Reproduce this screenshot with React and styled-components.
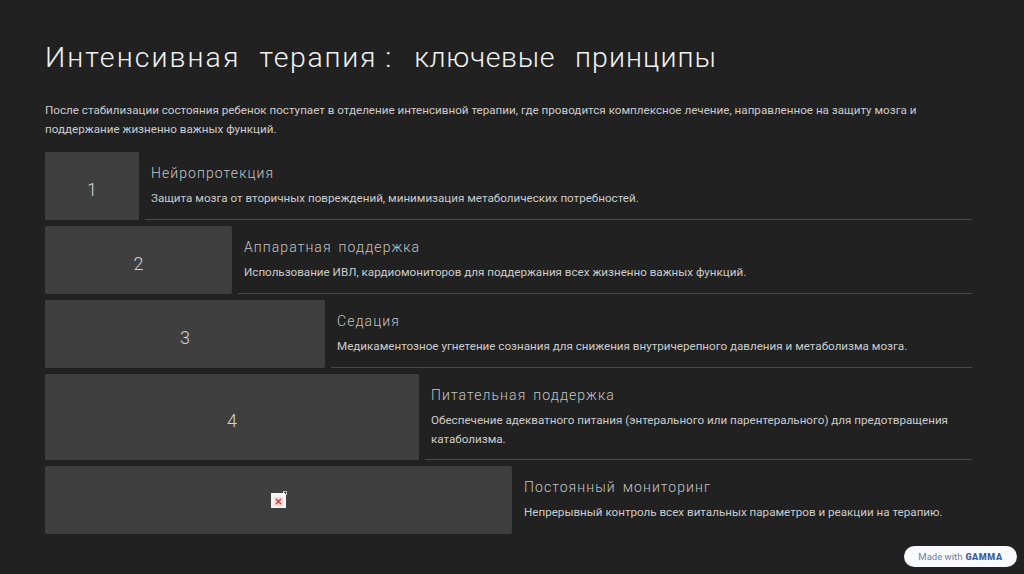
import React from "react";
import styled, { createGlobalStyle } from "styled-components";

const GlobalStyle = createGlobalStyle`
    html, body {
        margin: 0;
        padding: 0;
        background-color: #212121;
    }
`;

const Slide = styled.section`
    position: relative;
    box-sizing: border-box;
    width: 1024px;
    height: 574px;
    padding: 38px 52px 0 45px;
    overflow: hidden;
    background-color: #212121;
    font-family: Roboto, sans-serif;
`;

const Title = styled.h1`
    display: flex;
    margin: 0;
    font-size: 28.5px;
    line-height: 40px;
    font-weight: 300;
    color: #f1f1f1;
`;

const TitleWord = styled.span`
    margin-right: ${(p) => p.$gap}px;
    letter-spacing: ${(p) => p.$tracking}px;
`;

const Intro = styled.p`
    margin: 23px 0 13px;
    font-size: 11.65px;
    line-height: 19px;
    font-weight: 400;
    color: #cccccc;
`;

const Steps = styled.div`
    display: flex;
    flex-direction: column;
    gap: 6px;
`;

const Step = styled.div`
    display: flex;
    align-items: stretch;
    gap: 6px;
`;

const Block = styled.div`
    flex: 0 0 ${(p) => p.$width}px;
    box-sizing: border-box;
    display: flex;
    align-items: center;
    justify-content: center;
    padding-top: ${(p) => (p.$icon ? 0 : 6)}px;
    border-radius: 2px;
    background-color: #3f3f3f;
    font-size: 18px;
    font-weight: 300;
    color: #d4d4d4;
`;

const Body = styled.div`
    flex: 1;
    box-sizing: border-box;
    min-height: 68px;
    padding: 11px 6px 10px;
    border-bottom: ${(p) => (p.$plain ? "none" : "1px solid #4a4a4a")};
`;

const StepTitle = styled.h2`
    margin: 0 0 6px;
    font-size: 14px;
    line-height: 20px;
    font-weight: 300;
    letter-spacing: 1.08px;
    word-spacing: 2.5px;
    color: #c4c4c4;
`;

const StepText = styled.p`
    margin: 0;
    font-size: 11.64px;
    line-height: 19px;
    font-weight: 400;
    color: #cccccc;
`;

const BrokenImage = styled.svg`
    display: block;
    width: 18px;
    height: 18px;
`;

const Badge = styled.div`
    position: absolute;
    right: 7px;
    bottom: 7px;
    box-sizing: border-box;
    width: 113px;
    height: 21px;
    display: flex;
    align-items: center;
    justify-content: center;
    gap: 3px;
    border-radius: 11px;
    background-color: #f8fafd;
    font-size: 9.5px;
    color: #6f7fa6;
    b {
        font-size: 9px;
        font-weight: 900;
        letter-spacing: 0.6px;
        color: #3e5f9e;
    }
`;

const titleWords = [
    { text: "Интенсивная", tracking: 2.05, gap: 19 },
    { text: "терапия", tracking: 1.7, gap: 8 },
    { text: ":", tracking: 0, gap: 23 },
    { text: "ключевые", tracking: 0.6, gap: 20 },
    { text: "принципы", tracking: 1.05, gap: 0 },
];

const steps = [
    {
        width: 94,
        label: "1",
        title: "Нейропротекция",
        text: "Защита мозга от вторичных повреждений, минимизация метаболических потребностей.",
    },
    {
        width: 187,
        label: "2",
        title: "Аппаратная поддержка",
        text: "Использование ИВЛ, кардиомониторов для поддержания всех жизненно важных функций.",
    },
    {
        width: 280,
        label: "3",
        title: "Седация",
        text: "Медикаментозное угнетение сознания для снижения внутричерепного давления и метаболизма мозга.",
    },
    {
        width: 374,
        label: "4",
        title: "Питательная поддержка",
        text: "Обеспечение адекватного питания (энтерального или парентерального) для предотвращения катаболизма.",
    },
    {
        width: 467,
        title: "Постоянный мониторинг",
        text: "Непрерывный контроль всех витальных параметров и реакции на терапию.",
        plain: true,
    },
];

const App = () => {
    return (
        <Slide>
            <GlobalStyle />
            <Title>
                {titleWords.map((w) => (
                    <TitleWord key={w.text} $tracking={w.tracking} $gap={w.gap}>
                        {w.text}
                    </TitleWord>
                ))}
            </Title>
            <Intro>
                После стабилизации состояния ребенок поступает в отделение интенсивной терапии, где проводится
                комплексное лечение, направленное на защиту мозга и поддержание жизненно важных функций.
            </Intro>
            <Steps>
                {steps.map((s) => (
                    <Step key={s.title}>
                        <Block $width={s.width} $icon={!s.label}>
                            {s.label || (
                                <BrokenImage viewBox="0 0 18 18">
                                    <path d="M1 2h12v-1h1v1h1v1h1v14H1z" fill="#f4f4f4" />
                                    <path d="M13 0h4v4h-1V1h-3z" fill="#bdbdbd" />
                                    <rect x="4" y="6" width="9" height="9" fill="#f3d6d6" />
                                    <path d="M6 8l5 5M11 8l-5 5" stroke="#c8394a" strokeWidth="1.4" />
                                </BrokenImage>
                            )}
                        </Block>
                        <Body $plain={s.plain}>
                            <StepTitle>{s.title}</StepTitle>
                            <StepText>{s.text}</StepText>
                        </Body>
                    </Step>
                ))}
            </Steps>
            <Badge>
                Made with <b>GAMMA</b>
            </Badge>
        </Slide>
    );
};

export default App;
